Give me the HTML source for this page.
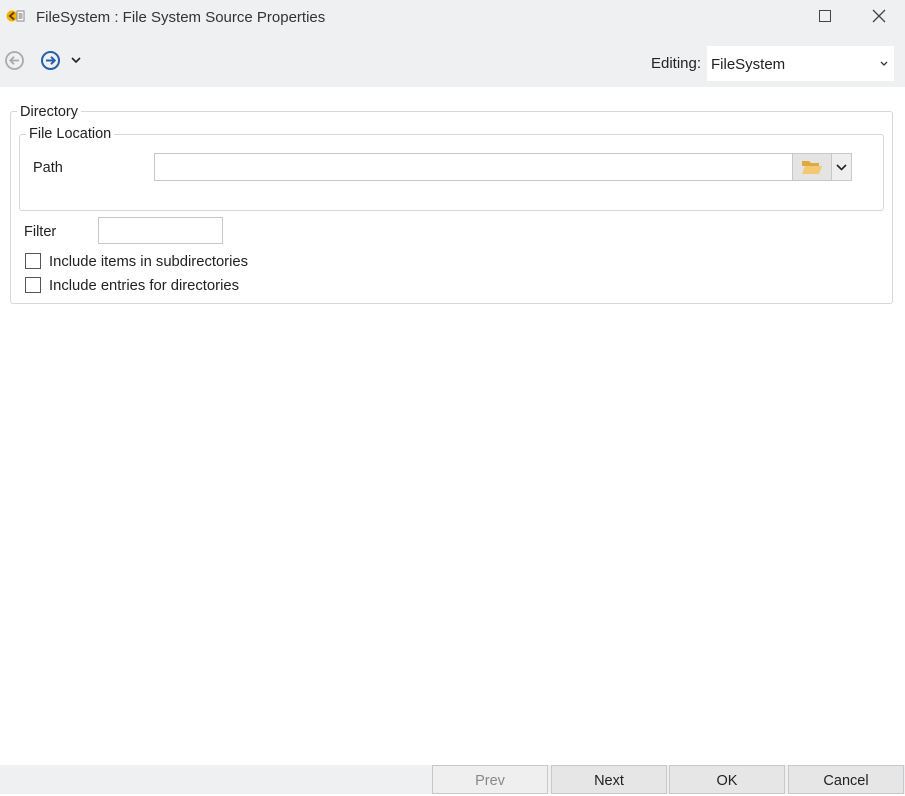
<!DOCTYPE html>
<html><head><style>
*{margin:0;padding:0;box-sizing:border-box}
body{width:905px;height:794px;background:#fff;font-family:"Liberation Sans",sans-serif;font-size:14px;color:#222;position:relative;overflow:hidden}
.a{position:absolute}
.t{white-space:nowrap}
.btn{position:absolute;top:765px;height:29px;width:116px;border:1px solid #c8c8c8;background:#e6e6e6;text-align:center;line-height:30px;font-size:14.5px;color:#222}
.cb{position:absolute;width:16px;height:16px;border:1px solid #555;background:#fff}
</style></head><body>
<div class="a" style="left:0;top:0;width:905px;height:87px;background:#eff0f2"></div>
<svg class="a" style="left:6px;top:8px" width="20" height="16" viewBox="0 0 20 16"><circle cx="6" cy="8" r="5.5" fill="#f0b400"/><path d="M8 4.5 L4 8 L8 11.5" stroke="#6b3a00" stroke-width="2" fill="none"/><rect x="11" y="3" width="7" height="10" fill="#fff" stroke="#888"/><path d="M12.5 6h4M12.5 8h4M12.5 10h4" stroke="#666"/></svg>
<div class="a t" style="left:36px;top:9px;font-size:15px;color:#333">FileSystem : File System Source Properties</div>
<div class="a" style="left:819px;top:10px;width:12px;height:12px;border:1.5px solid #444"></div>
<svg class="a" style="left:872px;top:9px" width="14" height="14"><path d="M1 1L13 13M13 1L1 13" stroke="#444" stroke-width="1.3"/></svg>
<svg class="a" style="left:4px;top:50px" width="21" height="21"><circle cx="10.5" cy="10.5" r="8.5" fill="none" stroke="#aaa" stroke-width="1.8"/><path d="M15 10.5H6.5M10 6.8L6.3 10.5 10 14.2" stroke="#aaa" stroke-width="1.8" fill="none"/></svg>
<svg class="a" style="left:40px;top:50px" width="21" height="21"><circle cx="10.5" cy="10.5" r="8.5" fill="none" stroke="#2a5ea8" stroke-width="2"/><path d="M6 10.5H14.5M11 6.8L14.7 10.5 11 14.2" stroke="#2a5ea8" stroke-width="2" fill="none"/></svg>
<svg class="a" style="left:71px;top:57px" width="10" height="7"><path d="M1 1L5 5 9 1" stroke="#222" stroke-width="1.6" fill="none"/></svg>
<div class="a t" style="left:651px;top:55px;font-size:15px">Editing:</div>
<div class="a" style="left:707px;top:46px;width:187px;height:35px;background:#fff"></div>
<div class="a t" style="left:711px;top:56px;font-size:15px">FileSystem</div>
<svg class="a" style="left:880px;top:61px" width="8" height="6"><path d="M1 1L4 4 7 1" stroke="#333" stroke-width="1.3" fill="none"/></svg>

<div class="a" style="left:10px;top:111px;width:883px;height:193px;border:1px solid #d8d8d8;border-radius:3px"></div>
<div class="a t" style="left:17px;top:104px;background:#fff;padding:0 3px;font-size:14.5px">Directory</div>
<div class="a" style="left:19px;top:134px;width:865px;height:77px;border:1px solid #d8d8d8;border-radius:3px"></div>
<div class="a t" style="left:26px;top:126px;background:#fff;padding:0 3px;font-size:14.5px">File Location</div>
<div class="a t" style="left:33px;top:160px;font-size:14.5px">Path</div>
<div class="a" style="left:154px;top:153px;width:639px;height:28px;border:1px solid #c8c8c8"></div>
<div class="a" style="left:792px;top:153px;width:40px;height:28px;background:#e4e4e4;border:1px solid #c8c8c8"></div>
<svg class="a" style="left:801px;top:159px" width="22" height="16"><path d="M1 2h7l2 2h8v3H1z" fill="#e0a93e"/><path d="M1 15L4 7h17l-3 8z" fill="#f3c873"/></svg>
<div class="a" style="left:831px;top:153px;width:21px;height:28px;background:#eee;border:1px solid #c8c8c8"></div>
<svg class="a" style="left:836px;top:164px" width="11" height="8"><path d="M1 1L5.5 5.5 10 1" stroke="#222" stroke-width="1.6" fill="none"/></svg>
<div class="a t" style="left:24px;top:224px;font-size:14.5px">Filter</div>
<div class="a" style="left:98px;top:217px;width:125px;height:27px;border:1px solid #c8c8c8"></div>
<div class="cb" style="left:25px;top:253px"></div>
<div class="a t" style="left:49px;top:254px;font-size:14.8px">Include items in subdirectories</div>
<div class="cb" style="left:25px;top:277px"></div>
<div class="a t" style="left:49px;top:278px;font-size:14.8px">Include entries for directories</div>

<div class="a" style="left:0;top:765px;width:905px;height:29px;background:#eff0f2"></div>
<div class="btn" style="left:432px;background:#efefef;color:#888">Prev</div>
<div class="btn" style="left:551px">Next</div>
<div class="btn" style="left:669px">OK</div>
<div class="btn" style="left:788px">Cancel</div>
</body></html>
